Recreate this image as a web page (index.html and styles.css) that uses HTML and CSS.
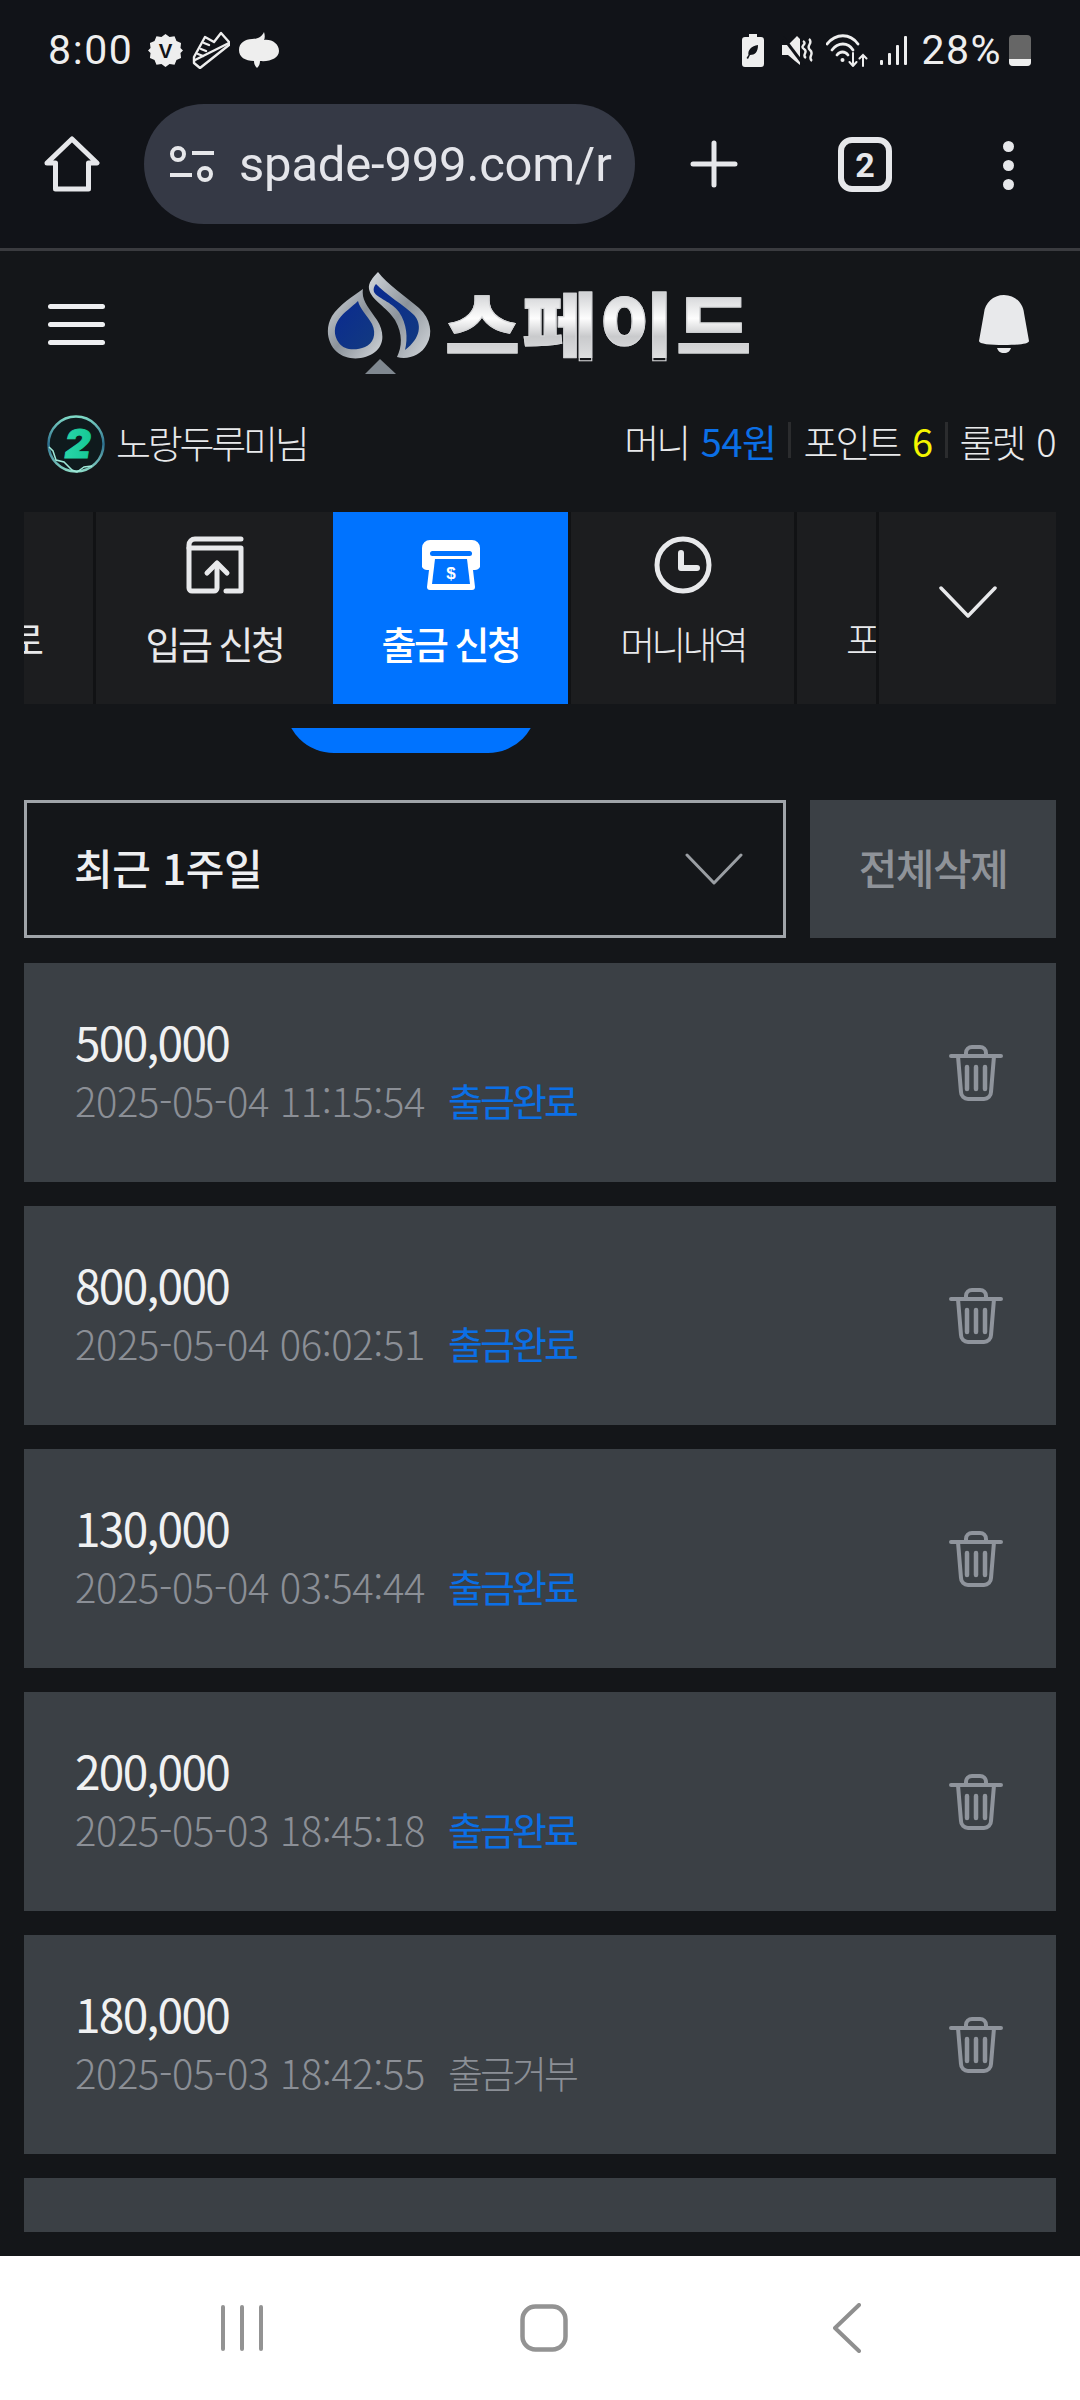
FILE: index.html
```html
<!DOCTYPE html>
<html lang="ko">
<head>
<meta charset="utf-8">
<title>출금 신청</title>
<link rel="stylesheet" href="styles.css">
</head>
<body>
<div class="app">
  <div class="statusbar">
    <div class="st-left">
      <span class="st-time">8:00</span>
      <svg class="ic" width="35" height="35" viewBox="0 0 36 36"><path fill="#eee" d="M18 1l4.200 3 5.100-.6 2 4.800 4.700 2-.6 5.200L36 18l-2.600 2.600.6 5.200-4.700 2-2 4.800-5.100-.6L18 35l-4.200-3-5.100.6-2-4.800-4.700-2 .6-5.200L0 18l2.600-2.600-.6-5.200 4.700-2 2-4.800 5.100.6z"/><text x="18" y="26" text-anchor="middle" class="badge-v">V</text></svg>
      <svg class="ic" width="38" height="38" viewBox="0 0 38 38" fill="none" stroke="#eee" stroke-width="2.400" stroke-linejoin="round" stroke-linecap="round"><path d="M2 26L13 6l9 5 7-9 8 9v3L8 37l-6-5z"/><path d="M3 29L37 12"/><path d="M12 12l5 2M9 18l5 2M6 23l5 2"/></svg>
      <svg class="ic" width="40" height="38" viewBox="0 0 40 38"><path fill="#eee" d="M25 1c1 3 1 6 0 8 8-1 15 4 15 11 0 7-9 11-19 10 0 3-1 5-3 7-2-2-3-4-3-7C6 30 0 26 0 19 0 12 6 8 13 8c5 0 10-2 12-7z"/></svg>
    </div>
    <div class="st-right">
      <svg class="ic" width="24" height="33" viewBox="0 0 24 33"><path fill="#eee" d="M8 0h8v3h4a3 3 0 0 1 3 3v24a3 3 0 0 1-3 3H4a3 3 0 0 1-3-3V6a3 3 0 0 1 3-3h4z"/><path fill="#111318" d="M17 11c0 7-3 10-8 10l-2 4-1.500-1 2-3c-1-5 3-9 9.500-10z"/></svg>
      <svg class="ic ic-mute" width="31" height="29" viewBox="0 0 31 29"><path fill="#eee" d="M0 9h6l9-9 3 3v26L13 25 6 19H0z"/><path fill="none" stroke="#111318" stroke-width="3" d="M0 0l22 29"/><path fill="none" stroke="#eee" stroke-width="2.400" d="M21 5c5 3-4 5 1 8s-3 6 2 9M27 3c5 4-4 7 1 11s-3 7 2 11"/></svg>
      <svg class="ic ic-wifi" width="45" height="34" viewBox="0 0 45 34" fill="none" stroke="#eee" stroke-width="2.800" stroke-linecap="round"><path d="M1 11C10 0 24 0 32 11"/><path d="M6 17c6-8 16-8 21 0"/><path d="M11 22c3-4 8-4 11 0"/><circle cx="16.500" cy="27" r="2" fill="#eee" stroke="none"/><path stroke-width="2" d="M27 20v13M23.500 29l3.500 4 3.500-4M37 33V22M33.500 25.500L37 22l3.500 3.500"/></svg>
      <svg class="ic ic-signal" width="28" height="29" viewBox="0 0 28 29" fill="#eee"><rect x="0" y="24" width="3" height="5" rx="1"/><rect x="8" y="17" width="3" height="12" rx="1"/><rect x="16" y="9" width="3" height="20" rx="1"/><rect x="24" y="0" width="3" height="29" rx="1"/></svg>
      <span class="st-pct">28%</span>
      <span class="st-batt"><span class="st-batt-fill"></span></span>
    </div>
  </div>

  <div class="browserbar">
    <svg class="b-home" width="56" height="56" viewBox="0 0 56 56" fill="none" stroke="#e6e7ea" stroke-width="5" stroke-linejoin="round" stroke-linecap="round"><path d="M3 27L28 3l25 24H44.500v26h-33V27z"/></svg>
    <div class="urlpill">
      <svg width="46" height="38" viewBox="0 0 46 38" fill="none" stroke="#e6e7ea" stroke-width="4"><circle cx="9" cy="9" r="6"/><path d="M23 8h22M1 30h22"/><circle cx="36" cy="29" r="6"/></svg>
      <span class="url">spade-999.com/r</span>
    </div>
    <svg class="b-plus" width="48" height="48" viewBox="0 0 48 48" stroke="#e6e7ea" stroke-width="5" stroke-linecap="round"><path d="M24 3v42M3 24h42"/></svg>
    <span class="b-tabs">2</span>
    <span class="b-menu"><i></i><i></i><i></i></span>
  </div>

  <div class="site">
    <div class="siteheader">
      <span class="burger"><i></i><i></i><i></i></span>
      <div class="logo">
        <svg width="106" height="104" viewBox="0 0 106 104">
          <defs>
            <linearGradient id="sv" x1="0" y1="0" x2="1" y2="1"><stop offset="0" stop-color="#d5d9dd"/><stop offset=".5" stop-color="#8b929a"/><stop offset="1" stop-color="#d4d8dc"/></linearGradient>
            <linearGradient id="bl" x1="0" y1="0" x2="1" y2="1"><stop offset="0" stop-color="#0a2a90"/><stop offset="1" stop-color="#123a80"/></linearGradient>
          </defs>
          <path fill="url(#sv)" d="M51 0C60 12 78 24 92 36c12 11 14 26 8 36-6 12-20 16-30 13 5-10 6-23-2-37C60 35 44 28 42 17c-1-6 4-12 9-17z"/>
          <path fill="url(#bl)" d="M49 12c9 10 29 22 38 31 8 9 7 23-9 35 3-12 2-26-6-38-7-10-22-14-25-20-1-3 0-6 2-8z"/>
          <path fill="url(#sv)" d="M36 17c-2 11 6 19 14 31 7 11 8 24-2 32-10 8-28 9-38 0C0 71-2 56 5 44c7-11 21-20 31-27z"/>
          <path fill="url(#bl)" d="M31 29c2 8 9 14 14 23 5 10 1 20-7 23-10 4-21 3-26-4-6-8-5-17 0-24 5-7 13-12 19-18z"/>
          <path fill="#808890" d="M53 87l16 15H38z"/>
        </svg>
        <span class="logotext">스페이드</span>
      </div>
      <svg class="bell" width="50" height="58" viewBox="0 0 50 58"><path fill="#e8e9eb" d="M25 0c11 0 19 8 20 18l5 28c0 3-11 4-25 4S0 49 0 46l5-28C6 8 14 0 25 0z"/><path fill="#e8e9eb" d="M18 53h14c-1 3-3 5-7 5s-6-2-7-5z"/></svg>
    </div>

    <div class="userrow">
      <div class="user">
        <svg width="58" height="58" viewBox="0 0 58 58">
          <defs>
            <linearGradient id="av" x1="0" y1="0" x2="0" y2="1"><stop offset="0" stop-color="#7fd9c6"/><stop offset=".5" stop-color="#2c6f8f"/><stop offset="1" stop-color="#8ad9c6"/></linearGradient>
            <linearGradient id="tw" x1="0" y1="0" x2="1" y2="0"><stop offset="0" stop-color="#29d6a8"/><stop offset="1" stop-color="#15c795"/></linearGradient>
          </defs>
          <circle cx="29" cy="29" r="27.500" fill="#0f1a1d" stroke="url(#av)" stroke-width="2.500"/>
          <path fill="none" stroke="#9fe8d8" stroke-width="1.500" d="M2 32l4 4 3 9 8 2 8 8 5 2 7-5 8-1"/>
          <text x="29" y="43" text-anchor="middle" class="avatar-2" fill="url(#tw)" stroke="url(#tw)">2</text>
        </svg>
        <span class="username">노랑두루미님</span>
      </div>
      <div class="wallet">
        <span>머니 <b class="blue">54원</b></span><i class="sep"></i>
        <span>포인트 <b class="yellow">6</b></span><i class="sep"></i>
        <span>룰렛 <b>0</b></span>
      </div>
    </div>

    <nav class="tabs">
      <div class="tab tab-cut-l"><span class="tab-label cut-l">로</span></div>
      <div class="tab tab-a">
        <svg width="58" height="58" viewBox="0 0 58 58" fill="none" stroke="#e8e9eb" stroke-width="5" stroke-linecap="round" stroke-linejoin="round"><path d="M55 3H9a6 6 0 0 0-6 6v43a3 3 0 0 0 3 3h22a3 3 0 0 0 3-3V29"/><path d="M3 12h52v43H40"/><path d="M21 37l10-10 10 10" /></svg>
        <span class="tab-label">입금 신청</span>
      </div>
      <div class="tab tab-b active">
        <svg width="58" height="50" viewBox="0 0 58 50"><path fill="#fff" d="M8 0h42a8 8 0 0 1 8 8v19a6 6 0 0 1-6 3h-1l2 17a3 3 0 0 1-3 3H8a3 3 0 0 1-3-3l2-17H6a6 6 0 0 1-6-3V8a8 8 0 0 1 8-8z"/><rect x="8" y="11" width="42" height="5" rx="2.500" fill="#0073ff"/><path fill="#0073ff" d="M13 19h32l3 25H10z"/><text x="29" y="39" text-anchor="middle" class="dollar">$</text></svg>
        <span class="tab-label">출금 신청</span>
      </div>
      <div class="tab tab-c">
        <svg width="58" height="58" viewBox="0 0 58 58" fill="none" stroke="#e8e9eb" stroke-width="5" stroke-linecap="round" stroke-linejoin="round"><circle cx="29" cy="29" r="26"/><path d="M27 17v15h16" stroke-width="6"/></svg>
        <span class="tab-label light">머니내역</span>
      </div>
      <div class="tab tab-cut-r"><span class="tab-label light cut-r">포인트</span></div>
      <div class="tab tab-more">
        <svg width="58" height="32" viewBox="0 0 58 32" fill="none" stroke="#e8e9eb" stroke-width="3.500" stroke-linecap="round" stroke-linejoin="round"><path d="M2 2l27 28L56 2"/></svg>
      </div>
    </nav>

    <main class="content">
      <div class="sub-peek"><div class="sub-pill"></div></div>
      <div class="filter">
        <div class="select">
          <span class="select-text">최근 1주일</span>
          <svg width="58" height="32" viewBox="0 0 58 32" fill="none" stroke="#9a9ea3" stroke-width="3" stroke-linecap="round" stroke-linejoin="round"><path d="M2 2l27 28L56 2"/></svg>
        </div>
        <button class="clear-all">전체삭제</button>
      </div>

      <ul class="list">
        <li class="card">
          <div class="card-body"><div class="amount">500,000</div><div class="meta"><span class="date">2025-05-04 11:15:54</span><span class="state ok">출금완료</span></div></div>
          <svg class="trash" width="54" height="56" viewBox="0 0 54 56" fill="none" stroke="#8f949c" stroke-width="4" stroke-linecap="round" stroke-linejoin="round"><path d="M2 11h50M17 11V8a6 6 0 0 1 6-6h8a6 6 0 0 1 6 6v3M9 11l3 36a7 7 0 0 0 7 7h16a7 7 0 0 0 7-7l3-36"/><path d="M18 22v22M27 22v22M36 22v22" stroke-width="4.500"/></svg>
        </li>
        <li class="card">
          <div class="card-body"><div class="amount">800,000</div><div class="meta"><span class="date">2025-05-04 06:02:51</span><span class="state ok">출금완료</span></div></div>
          <svg class="trash" width="54" height="56" viewBox="0 0 54 56" fill="none" stroke="#8f949c" stroke-width="4" stroke-linecap="round" stroke-linejoin="round"><path d="M2 11h50M17 11V8a6 6 0 0 1 6-6h8a6 6 0 0 1 6 6v3M9 11l3 36a7 7 0 0 0 7 7h16a7 7 0 0 0 7-7l3-36"/><path d="M18 22v22M27 22v22M36 22v22" stroke-width="4.500"/></svg>
        </li>
        <li class="card">
          <div class="card-body"><div class="amount">130,000</div><div class="meta"><span class="date">2025-05-04 03:54:44</span><span class="state ok">출금완료</span></div></div>
          <svg class="trash" width="54" height="56" viewBox="0 0 54 56" fill="none" stroke="#8f949c" stroke-width="4" stroke-linecap="round" stroke-linejoin="round"><path d="M2 11h50M17 11V8a6 6 0 0 1 6-6h8a6 6 0 0 1 6 6v3M9 11l3 36a7 7 0 0 0 7 7h16a7 7 0 0 0 7-7l3-36"/><path d="M18 22v22M27 22v22M36 22v22" stroke-width="4.500"/></svg>
        </li>
        <li class="card">
          <div class="card-body"><div class="amount">200,000</div><div class="meta"><span class="date">2025-05-03 18:45:18</span><span class="state ok">출금완료</span></div></div>
          <svg class="trash" width="54" height="56" viewBox="0 0 54 56" fill="none" stroke="#8f949c" stroke-width="4" stroke-linecap="round" stroke-linejoin="round"><path d="M2 11h50M17 11V8a6 6 0 0 1 6-6h8a6 6 0 0 1 6 6v3M9 11l3 36a7 7 0 0 0 7 7h16a7 7 0 0 0 7-7l3-36"/><path d="M18 22v22M27 22v22M36 22v22" stroke-width="4.500"/></svg>
        </li>
        <li class="card">
          <div class="card-body"><div class="amount">180,000</div><div class="meta"><span class="date">2025-05-03 18:42:55</span><span class="state">출금거부</span></div></div>
          <svg class="trash" width="54" height="56" viewBox="0 0 54 56" fill="none" stroke="#8f949c" stroke-width="4" stroke-linecap="round" stroke-linejoin="round"><path d="M2 11h50M17 11V8a6 6 0 0 1 6-6h8a6 6 0 0 1 6 6v3M9 11l3 36a7 7 0 0 0 7 7h16a7 7 0 0 0 7-7l3-36"/><path d="M18 22v22M27 22v22M36 22v22" stroke-width="4.500"/></svg>
        </li>
        <li class="card card-peek"></li>
      </ul>
    </main>
  </div>

  <div class="navbar">
    <svg class="nav-recent" width="44" height="46" viewBox="0 0 44 46" stroke="#939393" stroke-width="4" stroke-linecap="round"><path d="M3 2v42M22 2v42M41 2v42"/></svg>
    <svg class="nav-home" width="48" height="48" viewBox="0 0 48 48" fill="none" stroke="#939393" stroke-width="4.500"><rect x="2.500" y="2.500" width="43" height="43" rx="13"/></svg>
    <svg class="nav-back" width="28" height="50" viewBox="0 0 28 50" fill="none" stroke="#8f8f8f" stroke-width="4" stroke-linecap="round" stroke-linejoin="round"><path d="M26 2L2 25l24 23"/></svg>
  </div>
</div>
</body>
</html>
```

FILE: styles.css
```css
* { box-sizing: border-box; }
html, body { margin: 0; padding: 0; }
body { width: 1080px; height: 2400px; overflow: hidden; background: #141619; color: #e8e9eb; font-family: "Noto Sans CJK KR", "Noto Sans", sans-serif; }
.app { width: 1080px; height: 2400px; display: flex; flex-direction: column; }
.ic { display: block; flex: none; }

.statusbar { height: 100px; flex: none; background: #111318; display: flex; justify-content: space-between; align-items: center; padding: 0 49px 0 48px; }
.st-left, .st-right { display: flex; align-items: center; font-family: Roboto, sans-serif; font-size: 41px; color: #eeeeee; }
.st-left { gap: 9px; }
.st-time { margin-right: 6px; letter-spacing: 1.600px; }
.ic-mute { margin-left: 17px; }
.ic-wifi { margin-left: 13px; }
.ic-signal { margin-left: 9px; }
.st-pct { margin-left: 13px; letter-spacing: 1.500px; }
.badge-v { font: 900 21px "Liberation Sans", sans-serif; fill: #111318; }
.st-batt { display: block; width: 22px; height: 31px; margin-left: 7px; border-radius: 4px; background: #666; position: relative; overflow: hidden; }
.st-batt-fill { position: absolute; left: 0; right: 0; bottom: 0; height: 7px; background: #eee; }

.browserbar { height: 151px; flex: none; background: #111318; border-bottom: 3px solid #3a3b3f; display: flex; align-items: flex-start; padding: 4px 0 0 44px; }
.b-home { margin-top: 32px; }
.urlpill { width: 491px; height: 120px; margin-left: 44px; border-radius: 60px; background: #353945; display: flex; align-items: center; gap: 24px; padding-left: 25px; overflow: hidden; }
.url { font-family: Roboto, sans-serif; font-size: 49px; color: #e4e5ea; white-space: nowrap; letter-spacing: -.2px; }
.b-plus { margin: 36px 0 0 55px; }
.b-tabs { width: 54px; height: 55px; margin: 33px 0 0 100px; border: 6px solid #e6e7ea; border-radius: 14px; display: flex; align-items: center; justify-content: center; font: 700 34px Roboto, sans-serif; color: #e6e7ea; }
.b-menu { display: flex; flex-direction: column; gap: 8px; margin: 37px 0 0 111px; }
.b-menu i { display: block; width: 11px; height: 11px; border-radius: 50%; background: #e6e7ea; }

.site { flex: 1; min-height: 0; display: flex; flex-direction: column; overflow: hidden; }
.siteheader { height: 146px; flex: none; display: flex; align-items: center; padding: 0 51px 0 48px; }
.burger { display: flex; flex-direction: column; gap: 13px; width: 57px; }
.burger i { display: block; height: 5px; border-radius: 3px; background: #eeeff1; }
.logo { display: flex; align-items: center; gap: 12px; margin-left: 222px; }
.logotext { font-size: 72px; font-weight: 900; line-height: 1; letter-spacing: 2px; background: linear-gradient(#c4c6c9, #fdfdfd 45%, #c9cacc 70%, #dedfe0); -webkit-background-clip: text; background-clip: text; color: transparent; -webkit-text-stroke: 1px #d5d6d8; white-space: nowrap; transform: scaleX(1.13); transform-origin: left center; width: 280px; margin-top: -4px; }
.bell { margin-left: auto; display: block; }

.userrow { height: 94px; flex: none; display: flex; justify-content: space-between; align-items: center; padding: 0 24px 6px 47px; font-size: 38px; font-weight: 300; letter-spacing: -3.200px; color: #e8e9eb; }
.user { display: flex; align-items: center; gap: 11px; margin-top: 6px; }
.user svg { display: block; }
.username { margin-top: -5px; }
.avatar-2 { font: italic 900 40px Inter, sans-serif; }
.wallet { display: flex; align-items: center; white-space: nowrap; word-spacing: 5px; letter-spacing: -3px; margin-bottom: 2px; }
.wallet b { font-weight: 300; letter-spacing: -.5px; }
.blue { color: #0b6fe6; }
.wallet .blue, .wallet .yellow { font-weight: 400; }
.yellow { color: #f5f500; }
.sep { display: block; width: 3px; height: 36px; background: #2b2c2e; margin: 0 12px; }

.tabs { height: 192px; flex: none; margin: 21px 24px 0; display: flex; gap: 3px; background: #111214; }
.tab { background: #1c1d1f; flex: none; display: flex; flex-direction: column; align-items: center; justify-content: flex-start; padding-top: 24px; gap: 25px; overflow: hidden; }
.tab-label { font-size: 38px; font-weight: 400; letter-spacing: -2.500px; line-height: 48px; color: #e8e9eb; white-space: nowrap; }
.tab-label.light { font-weight: 300; letter-spacing: -3.800px; }
.tab svg { display: block; flex: none; }
.tab-cut-l { width: 69px; padding-top: 102px; align-items: flex-start; }
.cut-l { margin-left: -15px; }
.tab-a { width: 237px; }
.tab-b { width: 235px; margin-left: -3px; padding-top: 28px; gap: 29px; }
.tab-c { width: 223px; }
.tab-cut-r { width: 79px; padding-top: 102px; align-items: flex-start; }
.cut-r { margin-left: 49px; }
.tab-more { flex: 1; justify-content: center; padding: 0 0 12px; }
.active { background: #0073ff; }
.active .tab-label { color: #fff; font-weight: 500; }
.dollar { font: 700 17px "Liberation Sans", sans-serif; fill: #fff; }

.content { flex: 1; min-height: 0; overflow: hidden; padding: 0 24px; }
.sub-peek { height: 25px; margin: 24px 0 0 261px; width: 252px; overflow: hidden; display: flex; align-items: flex-end; }
.sub-pill { width: 252px; height: 98px; flex: none; background: #0073ff; border-radius: 49px; }
.filter { display: flex; gap: 24px; height: 138px; margin-top: 47px; }
.select { width: 762px; border: 3px solid #a0a4a9; background: #141619; display: flex; align-items: center; justify-content: space-between; padding: 0 40px 0 47px; font-size: 42px; font-weight: 500; letter-spacing: -.3px; color: #eeeff1; }
.select-text { margin-top: -5px; }
.clear-all { flex: 1; border: 0; background: #3b4045; color: #8f9399; font: 500 42px "Noto Sans CJK KR", sans-serif; letter-spacing: -1.500px; padding: 0 0 5px; }

.list { list-style: none; margin: 25px 0 0; padding: 0; display: flex; flex-direction: column; gap: 24px; }
.card { height: 219px; flex: none; background: #3b4045; display: flex; align-items: center; justify-content: space-between; padding: 0 53px 0 51px; }
.card-peek { height: 54px; }
.card-body { padding-bottom: 7px; }
.amount { font-size: 46px; line-height: 56px; letter-spacing: -1.700px; color: #f0f1f2; }
.meta { display: flex; align-items: center; gap: 23px; margin-top: 6px; font-weight: 300; }
.date { font-size: 40px; line-height: 50px; letter-spacing: -.4px; color: #8b8f96; }
.state { font-size: 38px; line-height: 50px; letter-spacing: -3px; color: #8b8f96; }
.state.ok { color: #0b6fe6; font-weight: 400; }
.trash { display: block; }

.navbar { height: 144px; flex: none; background: #fff; display: flex; align-items: center; padding: 0 0 0 220px; }
.nav-home { margin-left: 256px; }
.nav-back { margin-left: 265px; }
```
